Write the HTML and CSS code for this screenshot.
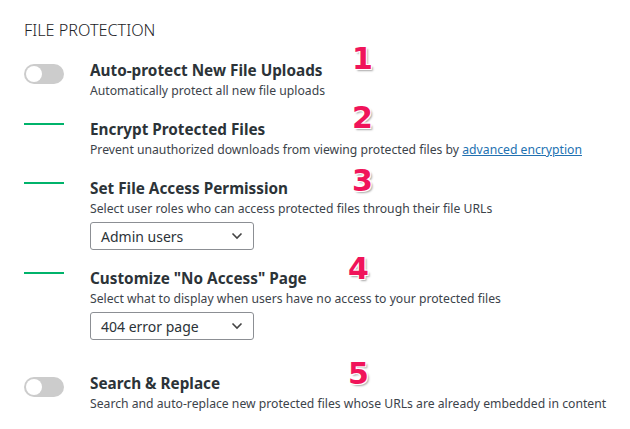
FILE: index.html
```html
<!DOCTYPE html>
<html lang="en">
<head>
  <meta charset="UTF-8">
  <title>File Protection</title>
  <link rel="stylesheet" href="styles.css">
</head>
<body>
  <div class="panel">
    <h2 class="section-title">FILE PROTECTION</h2>

    <div class="option">
      <div class="control"><span class="toggle"></span></div>
      <div class="body">
        <div class="title">Auto-protect New File Uploads</div>
        <div class="desc">Automatically protect all new file uploads</div>
      </div>
      <span class="num">1</span>
    </div>

    <div class="option">
      <div class="control"><span class="line"></span></div>
      <div class="body">
        <div class="title">Encrypt Protected Files</div>
        <div class="desc">Prevent unauthorized downloads from viewing protected files by <a href="#">advanced encryption</a></div>
      </div>
      <span class="num">2</span>
    </div>

    <div class="option">
      <div class="control"><span class="line"></span></div>
      <div class="body">
        <div class="title">Set File Access Permission</div>
        <div class="desc">Select user roles who can access protected files through their file URLs</div>
        <div class="select">Admin users <svg width="12" height="8" viewBox="0 0 12 8"><path d="M1.5 1.5 6 6l4.5-4.5" fill="none" stroke="#444" stroke-width="1.6"/></svg></div>
      </div>
      <span class="num num-3">3</span>
    </div>

    <div class="option">
      <div class="control"><span class="line"></span></div>
      <div class="body">
        <div class="title">Customize "No Access" Page</div>
        <div class="desc">Select what to display when users have no access to your protected files</div>
        <div class="select">404 error page <svg width="12" height="8" viewBox="0 0 12 8"><path d="M1.5 1.5 6 6l4.5-4.5" fill="none" stroke="#444" stroke-width="1.6"/></svg></div>
      </div>
      <span class="num num-left">4</span>
    </div>

    <div class="option last">
      <div class="control"><span class="toggle"></span></div>
      <div class="body">
        <div class="title">Search &amp; Replace</div>
        <div class="desc">Search and auto-replace new protected files whose URLs are already embedded in content</div>
      </div>
      <span class="num num-left">5</span>
    </div>
  </div>
</body>
</html>
```

FILE: styles.css
```css
body {
  margin: 0;
  background: #fff;
  font-family: 'Noto Sans', 'Open Sans', sans-serif;
  color: #3c434a;
}

.panel {
  padding: 18px 0 0 24px;
}

.section-title {
  margin: 0 0 18px 0;
  font-size: 16.2px;
  font-weight: 300;
  color: #1d2327;
  line-height: 24px;
}

.option {
  position: relative;
  display: flex;
  margin-bottom: 18px;
}

.option.last {
  margin-top: 33px;
}

.control {
  width: 66px;
  flex-shrink: 0;
  padding-top: 4px;
}

.toggle {
  display: block;
  position: relative;
  width: 40px;
  height: 20px;
  border-radius: 10px;
  background: #ccc;
}

.toggle::after {
  content: "";
  position: absolute;
  left: 2px;
  top: 2px;
  width: 16px;
  height: 16px;
  border-radius: 50%;
  background: #fff;
}

.line {
  display: block;
  width: 40px;
  height: 2px;
  background: #00b36b;
}

.title {
  font-size: 15.3px;
  font-weight: 700;
  color: #2c3338;
  line-height: 20px;
}

.desc {
  padding-top: 1px;
  font-size: 12.2px;
  line-height: 20px;
  color: #3c434a;
}

.desc a {
  color: #2271b1;
}

.select {
  display: flex;
  align-items: center;
  justify-content: space-between;
  box-sizing: border-box;
  width: 164px;
  height: 28px;
  margin-top: 3px;
  padding: 0 10px;
  border: 1px solid #8c8f94;
  border-radius: 3px;
  font-size: 14px;
  color: #2c3338;
}

.num {
  position: absolute;
  left: 328px;
  top: -19px;
  font-family: 'DejaVu Sans', sans-serif;
  font-size: 30px;
  font-weight: 700;
  color: #f0145a;
  text-shadow: -1px -1px 0 #fff, 1px -1px 0 #fff, -1px 1px 0 #fff, 1px 1px 0 #fff, 2px 2px 2px rgba(0,0,0,0.35);
}

.num-3 {
  top: -15px;
}

.num-left {
  left: 324px;
  top: -17px;
}
```
